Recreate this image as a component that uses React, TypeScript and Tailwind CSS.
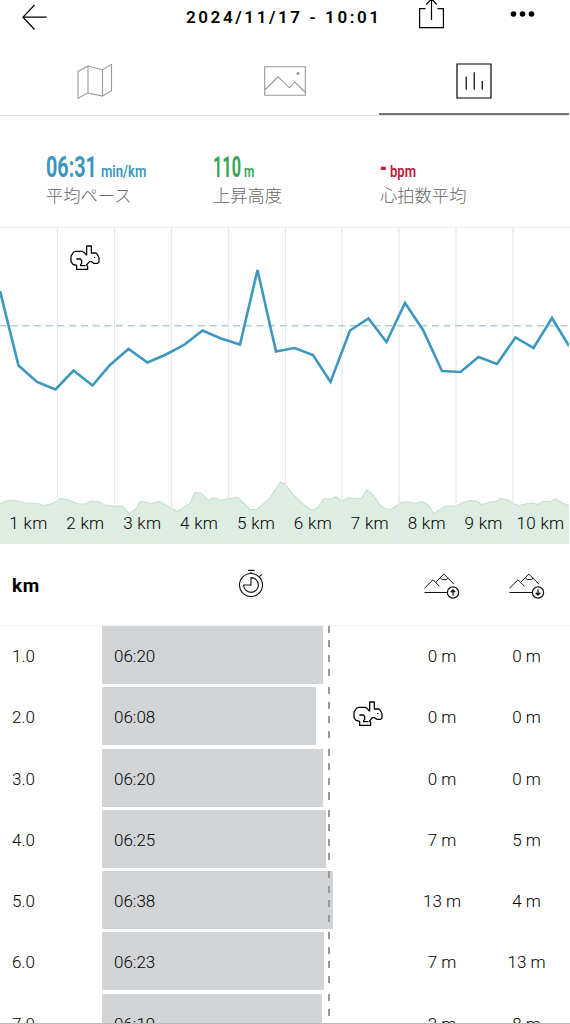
type Split = { km: string; pace: string; width: number; up: string; down: string; fastest?: boolean };

const splits: Split[] = [
  { km: "1.0", pace: "06:20", width: 220.5, up: "0 m", down: "0 m" },
  { km: "2.0", pace: "06:08", width: 213.5, up: "0 m", down: "0 m", fastest: true },
  { km: "3.0", pace: "06:20", width: 220.5, up: "0 m", down: "0 m" },
  { km: "4.0", pace: "06:25", width: 223.5, up: "7 m", down: "5 m" },
  { km: "5.0", pace: "06:38", width: 231, up: "13 m", down: "4 m" },
  { km: "6.0", pace: "06:23", width: 222, up: "7 m", down: "13 m" },
  { km: "7.0", pace: "06:19", width: 219.5, up: "2 m", down: "8 m" },
];

const pacePoints =
  "0,291 18.5,365.5 37,382 55.5,389.5 73.5,370.5 92.5,385.5 110,365 128.5,349 147.5,362.5 166,354.5 184,345 202.5,330.5 221,338.5 240,344.5 257.5,270 276,351.5 294.5,348 313,355 330.5,382 350,330.5 368.5,318.5 386.5,342 405,303 423,330 442,371 460.5,372 478.5,357 497,364 515.5,337.5 533.5,348 552,318 569,346";

const elevation =
  "0,504 6,501 13,500 25,503 38,503.5 44,505.5 51,504 57,501 61,498.5 68,500 78,504 85,504 91,501 98,501.5 105,505 113,506 122,506 129,513.5 136,509 140,501.5 152,503.5 159,501.5 167,505.5 177,511.5 190,503.5 195,492.5 201,493 208,500.5 213,498 221,500 229,498.5 238,497.5 250,509.5 257,509.5 269,499 280.5,482 285,484 294,495.5 303,504 312,510.5 318,507.5 324,498.5 331,499 336,497 341,501 348,498 361,498.5 367,490 373,495 380,505 385,509 391,509.5 402,502 409,502 416,503.5 422,501.5 428,505 434,514 440,509.5 446,506 456,506 463,502.5 470,500.5 476,501 482,504.5 490,502 497,501 501,498.5 508,500 513,503.5 519,505.5 528,503.5 533,503 538,504.5 543,501.5 550,501.5 556,499 562,503 569,506";

const gridLines = [57.5, 114.5, 171.5, 228.5, 285.5, 342, 399, 456, 513];

function Rabbit() {
  return (
    <svg width="30" height="25" viewBox="0 0 90 75" fill="none" stroke="#000" strokeWidth="3.8" strokeLinejoin="round">
      <path d="M50 31V3h14v21h14l4 4 5 10v13l-4 4H71l-6-5h-7l-9 11 4 3v9H20V61l-11-3-6-8V33l8-12 7-2h19l6 4 7 8" />
      <path d="M19 42h12l4 4v9l-3 4v3h14" />
      <path d="M74 36v3" />
    </svg>
  );
}

function MountainIcon({ down = false }: { down?: boolean }) {
  return (
    <svg className="mt-0.5" width="36" height="27" viewBox="0 0 36 27" fill="none" stroke="#111" strokeWidth="1">
      <path d="M.5 16.2 9 7.8l6.5 6.5M11.8 10.2l8-8.2L30 12.2M16.2 5.8l2 1.8h4.2l1.8-1.5M.5 20.5H23" />
      <circle cx="29" cy="20.5" r="5.6" strokeWidth="1.2" />
      <path d={down ? "M29 17.5v5.5m-2.3-2.3 2.3 2.3 2.3-2.3" : "M29 23.5V18m-2.3 2.3L29 18l2.3 2.3"} strokeWidth="1.3" />
    </svg>
  );
}

function Stopwatch() {
  return (
    <svg className="mb-[3px]" width="26" height="30" viewBox="0 0 26 30" fill="none" stroke="#111" strokeWidth="1.1">
      <circle cx="13" cy="17" r="11.5" />
      <path d="M13 9.6a7.4 7.4 0 1 1-7.4 7.4H13ZM10 2.4h6.5M13 4v1.5M21.3 8.6 24 6.4" />
    </svg>
  );
}

export default function App() {
  return (
    <div className="flex h-[1024px] w-[570px] flex-col overflow-hidden border-b border-[#bbb] bg-white font-['Roboto','Noto_Sans_CJK_JP',sans-serif] text-[#111]">
      <header className="flex h-[34px] shrink-0 items-center">
        <svg className="ml-[22px]" width="26" height="28" viewBox="0 0 26 28" fill="none" stroke="#000" strokeWidth="1.2">
          <path d="M12.5 2 1 14.2l11.5 12.3M1 14.2h23.7" />
        </svg>
        <h1 className="ml-[138px] w-[232px] text-[17px] leading-[34px] font-semibold tracking-[2.6px] whitespace-pre text-black">
          2024/11/17 - 10:01
        </h1>
        <svg className="shrink-0" width="27" height="34" viewBox="0 0 27 34" fill="none" stroke="#000" strokeWidth="1.2">
          <path d="M7.5 8.6H1.6v19h23.8v-19h-5.9M13.5 20V-1M8.2 4.5 13.5-1l5.3 5.5" />
        </svg>
        <svg className="mb-1.5 ml-[65px] shrink-0" width="25" height="8" viewBox="0 0 25 8">
          <circle cx="3.5" cy="4" r="2.8" />
          <circle cx="12.5" cy="4" r="2.8" />
          <circle cx="21.5" cy="4" r="2.8" />
        </svg>
      </header>

      <nav className="grid h-[82px] w-[569px] shrink-0 grid-cols-3 border-b border-[#e4e4ea]">
        <div className="flex items-center justify-center pt-3 pl-px">
          <svg width="36" height="36" viewBox="0 0 36 36" fill="none" stroke="#999" strokeWidth="1.1">
            <path d="M1 8.5 11 3v27L1 35.2Zm10-5.5 14.5 3.8V33L11 30M25.5 6.8l9-5.4v26.4l-9 5.2" />
          </svg>
        </div>
        <div className="flex items-center justify-center pt-3 pl-px">
          <svg width="42" height="30" viewBox="0 0 42 30" fill="none" stroke="#999" strokeWidth="1.1">
            <path d="M.7.7h40.6v28.6H.7ZM.7 24 14 10.8l11.5 11 5.2-5.8L41 26" />
            <circle cx="34" cy="7.5" r="1" fill="#999" />
          </svg>
        </div>
        <div className="flex items-center justify-center border-b-2 border-[#746e76] pt-3">
          <svg className="mt-0.5" width="36" height="36" viewBox="0 0 36 36" fill="none" stroke="#000" strokeWidth="1.2">
            <path d="M1 1h34v34H1ZM10.2 13.8v13M18.2 9.2v17.6M26.2 18v8.8" />
          </svg>
        </div>
      </nav>

      <section className="flex h-[112px] shrink-0 border-b border-[#ececec] pt-[37px] pl-[46px]">
        <div className="w-[167px] shrink-0">
          <div className="flex h-[30px] items-baseline font-bold whitespace-nowrap text-[#3b97bd]">
            <span className="w-[55px]">
              <span className="inline-block origin-left scale-x-[0.68] text-[29px] leading-[28px]">06:31</span>
            </span>
            <span className="inline-block origin-left scale-x-[0.77] text-[17px] leading-[28px] font-semibold">min/km</span>
          </div>
          <p className="text-[17.3px] leading-[26px] font-light text-[#666]">平均ペース</p>
        </div>
        <div className="w-[167px] shrink-0">
          <div className="flex h-[30px] items-baseline font-bold whitespace-nowrap text-[#3aa45a]">
            <span className="w-[31px]">
              <span className="inline-block origin-left scale-x-[0.56] text-[29px] leading-[28px]">110</span>
            </span>
            <span className="inline-block origin-left scale-x-[0.7] text-[17px] leading-[28px] font-semibold">m</span>
          </div>
          <p className="text-[17.3px] leading-[26px] font-light text-[#666]">上昇高度</p>
        </div>
        <div className="w-[167px] shrink-0">
          <div className="flex h-[30px] items-baseline font-bold whitespace-nowrap text-[#c2183c]">
            <span className="w-[10px]">
              <span className="inline-block origin-left scale-x-[0.6] text-[29px] leading-[28px]">-</span>
            </span>
            <span className="inline-block origin-left scale-x-[0.77] text-[17px] leading-[28px] font-semibold">bpm</span>
          </div>
          <p className="text-[17.3px] leading-[26px] font-light text-[#666]">心拍数平均</p>
        </div>
      </section>

      <section className="relative h-[316px] w-[569px] shrink-0">
        <svg width="569" height="316" viewBox="0 228 569 316" fill="none">
          <polygon points={`0,544 ${elevation} 569,544`} fill="#dceee2" />
          <polyline points={elevation} stroke="#c7dfd0" strokeWidth="1.2" />
          {gridLines.map((x) => (
            <path key={x} d={`M${x} 228V544`} stroke="#e9e9ed" strokeWidth="1.3" />
          ))}
          <path d="M0 325.7H569" stroke="#b2cdd6" strokeWidth="1.5" strokeDasharray="7 4.7" strokeDashoffset="1" />
          <polyline points={pacePoints} stroke="#3c98be" strokeWidth="2.6" />
        </svg>
        <div className="absolute top-[17px] left-[70px]">
          <Rabbit />
        </div>
        <div className="absolute inset-x-0 bottom-[8px] grid grid-cols-10 text-center text-[17px] leading-[26px] font-light tracking-[0.3px] whitespace-nowrap text-black">
          {gridLines.concat(569).map((_, i) => (
            <span key={i}>{i + 1} km</span>
          ))}
        </div>
      </section>

      <section className="flex h-[82px] shrink-0 items-center border-b border-[#f4f4f4]">
        <span className="w-[102px] pt-1 pl-3 text-[19px] font-bold tracking-[0.5px] text-black">km</span>
        <span className="flex w-[298px] justify-center">
          <Stopwatch />
        </span>
        <span className="flex w-[84px] justify-center">
          <MountainIcon />
        </span>
        <span className="flex w-[85px] justify-center">
          <MountainIcon down />
        </span>
      </section>

      <section className="text-[17px] text-black">
        {splits.map((s) => (
          <div key={s.km} className="relative flex h-[61.25px] leading-[60px]">
            <span className="w-[102px] pl-3 font-light">{s.km}</span>
            <div className="w-[298px]">
              <div className="h-[58px] bg-[#d1d5d8] pl-3 font-light" style={{ width: s.width }}>
                {s.pace}
              </div>
            </div>
            <span className="w-[84px] text-center font-light">{s.up}</span>
            <span className="w-[85px] text-center font-light">{s.down}</span>
            <div className="absolute top-0 left-[328px] h-[58px] w-[1.5px] bg-[repeating-linear-gradient(to_bottom,#999_0_7px,transparent_7px_14.5px)]" />
            {s.fastest && (
              <div className="absolute top-[14px] left-[353px]">
                <Rabbit />
              </div>
            )}
          </div>
        ))}
      </section>
    </div>
  );
}
